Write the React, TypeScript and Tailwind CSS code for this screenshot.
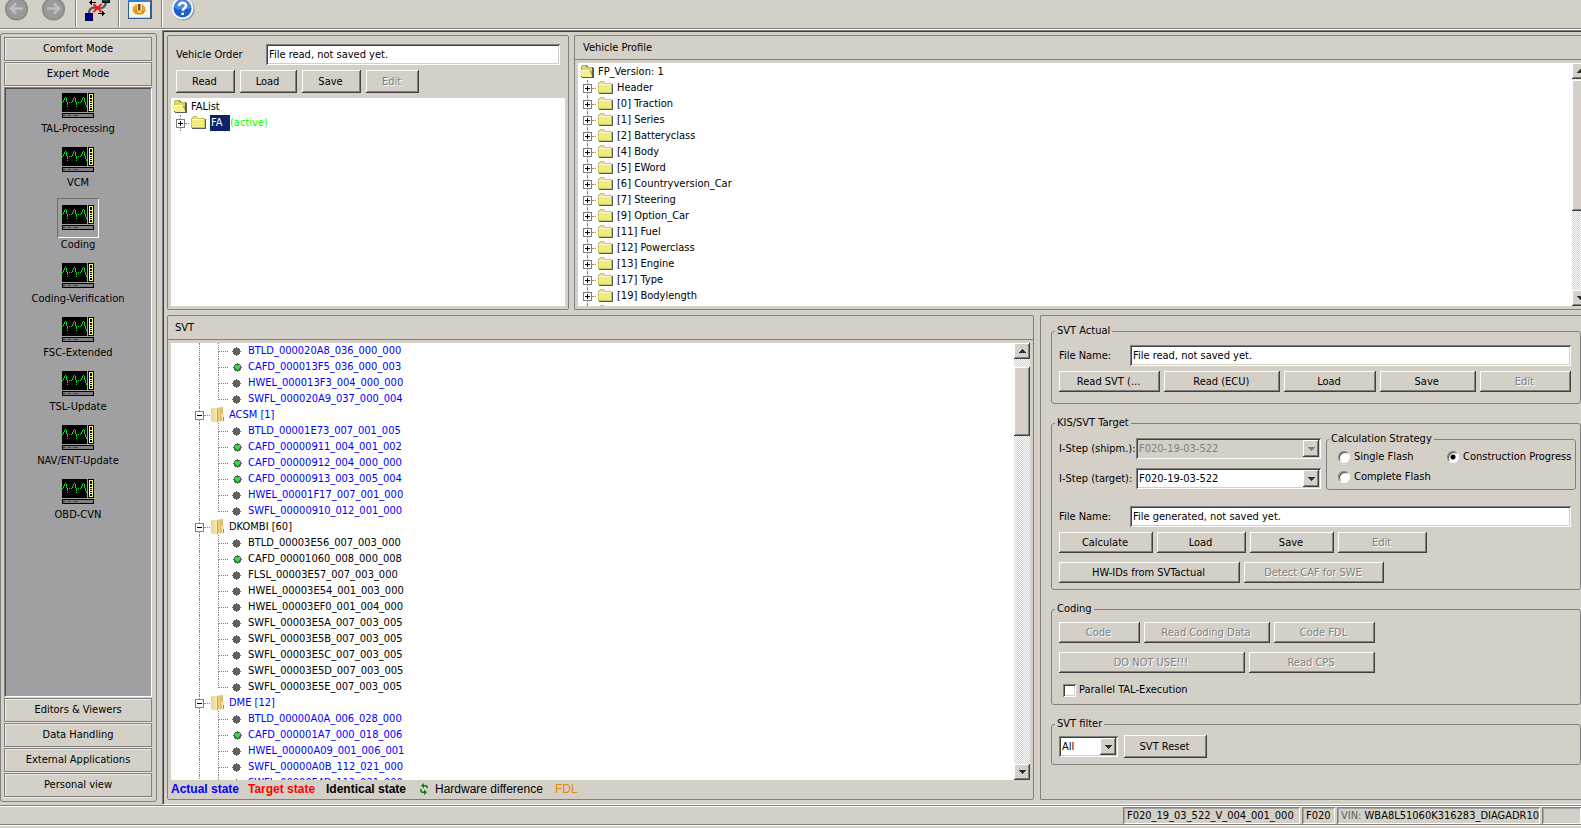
import type { ReactNode } from "react";

const RAISED =
  "bg-[#d4d0c8] shadow-[inset_-1px_-1px_#404040,inset_1px_1px_#ffffff,inset_-2px_-2px_#808080]";
const SUNKEN =
  "shadow-[inset_1px_1px_#808080,inset_-1px_-1px_#ffffff,inset_2px_2px_#404040,inset_-2px_-2px_#d4d0c8]";

/* ---------- controls ---------- */

function Btn({ children, className = "h-[21px]", disabled = false }: { children: ReactNode; className?: string; disabled?: boolean }) {
  return (
    <button
      type="button"
      disabled={disabled}
      className={`${RAISED} truncate pr-[9px] pl-[7px] text-center ${disabled ? "text-[#808080] [text-shadow:1px_1px_#ffffff]" : ""} ${className}`}
    >
      {children}
    </button>
  );
}

function TextField({ id, value }: { id: string; value: string }) {
  return (
    <input
      id={id}
      type="text"
      defaultValue={value}
      className={`${SUNKEN} h-[21px] min-w-0 flex-1 bg-white px-[3px] outline-none`}
    />
  );
}

function Dropdown({ id, value, className, disabled = false, label }: { id: string; value: string; className: string; disabled?: boolean; label?: string }) {
  return (
    <div className={`relative h-[21px] ${className}`}>
      <select
        id={id}
        disabled={disabled}
        aria-label={label}
        className={`${SUNKEN} h-full w-full appearance-none px-[3px] opacity-100 outline-none ${disabled ? "bg-[#d4d0c8] text-[#808080]" : "bg-white"}`}
      >
        <option>{value}</option>
      </select>
      <span className={`${RAISED} pointer-events-none absolute top-[2px] right-[2px] bottom-[2px] flex w-4 items-center justify-center`}>
        <Arrow down color={disabled ? "#808080" : "#303030"} />
      </span>
    </div>
  );
}

function Arrow({ down = false, color = "#303030" }: { down?: boolean; color?: string }) {
  return (
    <svg width="7" height="4" viewBox="0 0 7 4" fill={color} shapeRendering="crispEdges" aria-hidden="true">
      <path d={down ? "M0 0h7v1h-1v1h-1v1h-1v1h-1v-1h-1v-1h-1v-1h-1z" : "M3 0h1v1h1v1h1v1h1v1h-7v-1h1v-1h1v-1h1z"} />
    </svg>
  );
}

function ScrollBar({ className, gap, thumb }: { className: string; gap: string; thumb: string }) {
  return (
    <div className={`flex shrink-0 flex-col overflow-hidden bg-[repeating-conic-gradient(#ffffff_0_25%,#d4d0c8_0_50%)] bg-[length:2px_2px] ${className}`}>
      <button type="button" aria-label="Scroll up" className={`${RAISED} flex h-4 w-4 shrink-0 items-center justify-center`}>
        <Arrow />
      </button>
      <div className={`${RAISED} w-4 ${gap} ${thumb}`} />
      <button type="button" aria-label="Scroll down" className={`${RAISED} mt-auto flex h-4 w-4 shrink-0 items-center justify-center`}>
        <Arrow down />
      </button>
    </div>
  );
}

function Group({ title, legend = "-ml-1", className = "", children }: { title: string; legend?: string; className?: string; children: ReactNode }) {
  return (
    <fieldset className={`min-w-0 rounded-[3px] border border-[#808080] ${className}`}>
      <legend className={`px-[2px] leading-4 ${legend}`}>{title}</legend>
      {children}
    </fieldset>
  );
}

/* ---------- icons ---------- */

function FolderClosed() {
  return (
    <svg width="15" height="13" viewBox="0 0 15 13" shapeRendering="crispEdges" className="-mt-[2px] shrink-0" aria-hidden="true">
      <path d="M1 1h1v-1h4v1h1v1h7v1h1v10h-14v-1h-1v-10h1z" fill="#5c5c50" />
      <path d="M1 1h1v-1h4v1h1v1h7v10h-14v-10h1z" fill="#c6c25c" />
      <path d="M2 1h4v1h1v1h-5z" fill="#e6e27a" />
      <path d="M1 3h12v8h-12z" fill="#f2ee84" />
      <path d="M1 3h12v1h-12z" fill="#fdfdea" />
      <path d="M3 5h1v1h-1zM7 6h1v1h-1zM11 5h1v1h-1zM5 8h1v1h-1zM9 9h1v1h-1zM2 9h1v1h-1zM11 8h1v1h-1z" fill="#e0d75c" />
    </svg>
  );
}

function FolderOpen() {
  return (
    <svg width="15" height="13" viewBox="0 0 15 13" shapeRendering="crispEdges" className="-mt-[2px] shrink-0" aria-hidden="true">
      <path d="M3 1h1v-1h4v1h1v1h5v1h1v10h-12v-1h-1v-4h-1v-3h1v-3h1z" fill="#5c5c50" />
      <path d="M2 1h1v-1h4v1h1v1h5v10h-10v-1h-1z" fill="#b5b04c" />
      <path d="M3 1h4v1h1v1h5v3h-10z" fill="#dcd76c" />
      <path d="M0 5h10v1h1v2h1v2h1v2h-10v-1h-1v-2h-1v-2h-1z" fill="#f4f090" />
      <path d="M0 5h10v1h-9z" fill="#fffff0" />
    </svg>
  );
}

function FolderEcu() {
  return (
    <svg width="14" height="16" viewBox="0 0 14 16" className="shrink-0" aria-hidden="true">
      <defs>
        <linearGradient id="ecuLeft" x1="0" x2="1">
          <stop offset="0" stopColor="#ecd586" />
          <stop offset="1" stopColor="#f8e9b4" />
        </linearGradient>
        <linearGradient id="ecuRight" x1="0" x2="1">
          <stop offset="0" stopColor="#f3dd92" />
          <stop offset="1" stopColor="#dcb75a" />
        </linearGradient>
      </defs>
      <path d="M4 1l8-1v14l-7 1z" fill="url(#ecuRight)" />
      <path d="M0 1h4l2 1v14l-6-2z" fill="url(#ecuLeft)" />
      <path d="M6 2l1-1v14l-1 1z" fill="#cfa848" />
      <path d="M10 7h3v7h-2z" fill="#f5e6b4" />
      <path d="M12 10h1v4h-1z" fill="#4aa0e0" />
    </svg>
  );
}

function Bullet({ green }: { green: boolean }) {
  return (
    <svg width="9" height="9" viewBox="0 0 9 9" shapeRendering="crispEdges" className={green ? "ml-[5px] shrink-0" : "ml-1 shrink-0"} aria-hidden="true">
      <path d="M4 0h1v1h2v1h1v2h1v1h-1v2h-1v1h-2v1h-1v-1h-2v-1h-1v-2h-1v-1h1v-2h1v-1h2z" fill="#606060" />
      {green && <path d="M2 2h2v1h1v-1h2v3h-1v1h-1v1h-1v-1h-1v-1h-1z" fill="#1fee1f" />}
    </svg>
  );
}

function EcuIcon() {
  return (
    <svg width="32" height="25" viewBox="0 0 32 25" shapeRendering="crispEdges" aria-hidden="true">
      <path d="M0 0h25v19h-25zM26 0h6v19h-6zM0 20h32v5h-32z" fill="#000000" />
      <path d="M27 1h4v17h-4z" fill="#ffff66" />
      <path d="M28 2h2v3h-2zM28 6h2v2h-2zM28 9h2v1h-2zM28 11h2v1h-2zM28 13h2v1h-2zM28 15h2v2h-2z" fill="#000000" />
      <path d="M1 21h30v3h-30z" fill="#808080" />
      <path d="M1 22h3v1h-3zM6 22h3v1h-3zM11 22h5v1h-5z" fill="#e00000" />
      <g fill="#00e020">
        <path d="M0 9h1v1h-1zM1 7h1v2h-1zM2 5h1v2h-1zM3 4h1v1h-1zM4 5h1v4h-1zM5 9h1v3h-1zM5 13h1v1h-1zM7 9h1v1h-1zM9 9h1v1h-1z" />
        <path d="M10 7h1v2h-1zM11 5h1v2h-1zM12 4h1v1h-1zM13 5h1v4h-1zM14 9h1v3h-1zM14 13h1v1h-1zM16 9h1v1h-1zM18 9h1v1h-1z" />
        <path d="M19 7h1v2h-1zM20 5h1v2h-1zM21 4h1v1h-1zM22 5h1v4h-1zM23 9h1v3h-1zM24 12h1v2h-1z" />
      </g>
    </svg>
  );
}

function NavArrow({ back }: { back: boolean }) {
  return (
    <svg width="25" height="22" viewBox="0 0 25 22" aria-hidden="true">
      <circle cx="12.5" cy="9" r="11.6" fill="#8c8c8c" />
      <circle cx="12.5" cy="9" r="9.8" fill="#9a9a9a" />
      <path
        d={back ? "M19 8.500H7M12 3.500L7 8.500l5 5" : "M6 8.500h12M13 3.500L18 8.500l-5 5"}
        fill="none"
        stroke="#c2bfb9"
        strokeWidth="2.600"
      />
    </svg>
  );
}

function ConnectionIcon() {
  return (
    <svg width="25" height="22" viewBox="0 0 25 22" aria-hidden="true">
      <path d="M4 14c0-7 5-7 9-6s8-1 8-7" fill="none" stroke="#5a5a5a" strokeWidth="2.400" />
      <g shapeRendering="crispEdges">
        <path d="M17 0h8v3h-8z" fill="#000000" />
        <path d="M18 0h6v2h-6z" fill="#00504c" />
        <path d="M0 13h8v8h-8z" fill="#000030" />
        <path d="M1 14h6v6h-6z" fill="#00008c" />
        <path d="M4 2h1v-1h1v-1h1v2h4v1h-4v2h-1v-1h-1v-1h-1z" fill="#000000" />
        <path d="M13 13h4v-2h1v1h1v1h1v1h-1v1h-1v1h-1v-2h-4z" fill="#000000" />
      </g>
      <path d="M8.500 4l8 8M16.500 4l-8 8" stroke="#f01414" strokeWidth="1.800" />
    </svg>
  );
}

function WindowIcon() {
  return (
    <svg width="24" height="19" viewBox="0 0 24 19" aria-hidden="true">
      <path d="M0 0h24v19h-24z" fill="#2c5f94" />
      <path d="M0 0h23v2h-23z" fill="#2f7fd0" />
      <path d="M19 0h3v1h-3z" fill="#e0522c" />
      <path d="M1 2h21v15h-21z" fill="#f6f5ea" />
      <path d="M1 17h21v1h-21z" fill="#bcd2e6" />
      <path d="M8 4l1.500 1-.5 5h5l-.5-5 1.500-1 .5 2 2 1.500-.5 1.500 1 2-2 1-.5 2h-2l-1 1-1.500-.5-1.500.5-1-1h-2l-.5-2-2-1 1-2-.5-1.500 2-1.500z" fill="#eda022" />
      <path d="M6 11h11l-2 3h-7z" fill="#d98a1a" />
      <path d="M10 4h2.500v6.500h-2.500z" fill="#6a5424" />
      <path d="M9.500 10.500h4v2.500h-4z" fill="#f8dc8c" />
    </svg>
  );
}

function HelpIcon() {
  return (
    <svg width="24" height="22" viewBox="0 0 24 22" aria-hidden="true">
      <circle cx="12.500" cy="9.500" r="11" fill="#8a98ac" />
      <circle cx="11.500" cy="8.500" r="10.800" fill="#f4f8ff" />
      <circle cx="11.500" cy="8.500" r="9" fill="#1f5fc8" />
      <path d="M3.500 8a8 8 0 0 1 16 0c-4 2-12 2-16 0z" fill="#4d8ae4" />
      <path d="M8.200 6c0-4.200 6.800-4.200 6.800-.4 0 2.600-3.300 2.600-3.300 5.200" fill="none" stroke="#ffffff" strokeWidth="2.400" />
      <path d="M10.400 12.600h2.600v2.400h-2.600z" fill="#ffffff" />
    </svg>
  );
}

function HardwareIcon() {
  return (
    <svg width="10" height="12" viewBox="0 0 10 12" fill="#108018" aria-hidden="true">
      <path d="M5 0v2h2q2 0 2 3h-1.500q0-1.500-1-1.500h-1.500v2l-3-2.700z" />
      <path d="M5 12v-2h-2q-2 0-2-4h1.500q0 2.500 1 2.500h1.500v-2l3 2.700z" />
    </svg>
  );
}

/* ---------- tree parts ---------- */

function Expander({ open = false }: { open?: boolean }) {
  return (
    <span className="flex h-4 shrink-0 flex-col items-center">
      <span className="h-1 w-px border-l border-dotted border-[#808080]" />
      <button
        type="button"
        aria-label={open ? "Collapse" : "Expand"}
        className="flex h-[9px] w-[9px] shrink-0 items-center justify-center border border-[#808080] bg-white"
      >
        <svg width="5" height="5" viewBox="0 0 5 5" shapeRendering="crispEdges" aria-hidden="true">
          <path d={open ? "M0 2h5v1h-5z" : "M0 2h2v-2h1v2h2v1h-2v2h-1v-2h-2z"} fill="#000000" />
        </svg>
      </button>
      <span className="h-[3px] w-px border-l border-dotted border-[#808080]" />
    </span>
  );
}

function FolderRow({ children }: { children: ReactNode }) {
  return (
    <li className="flex h-4 items-center pl-[5px] leading-4 whitespace-pre">
      <Expander />
      <span className="mr-[2px] mt-px w-1 border-t border-dotted border-[#808080]" />
      <FolderClosed />
      <span className="ml-1 flex">{children}</span>
    </li>
  );
}

function RootRow({ children }: { children: ReactNode }) {
  return (
    <li className="flex h-4 items-center gap-1 pl-px leading-4">
      <FolderOpen />
      {children}
    </li>
  );
}

type Ecu = { name?: string; blue: boolean; items: string[] };

const ECUS: Ecu[] = [
  {
    blue: true,
    items: ["BTLD_000020A8_036_000_000", "CAFD_000013F5_036_000_003", "HWEL_000013F3_004_000_000", "SWFL_000020A9_037_000_004"],
  },
  {
    name: "ACSM [1]",
    blue: true,
    items: [
      "BTLD_00001E73_007_001_005",
      "CAFD_00000911_004_001_002",
      "CAFD_00000912_004_000_000",
      "CAFD_00000913_003_005_004",
      "HWEL_00001F17_007_001_000",
      "SWFL_00000910_012_001_000",
    ],
  },
  {
    name: "DKOMBI [60]",
    blue: false,
    items: [
      "BTLD_00003E56_007_003_000",
      "CAFD_00001060_008_000_008",
      "FLSL_00003E57_007_003_000",
      "HWEL_00003E54_001_003_000",
      "HWEL_00003EF0_001_004_000",
      "SWFL_00003E5A_007_003_005",
      "SWFL_00003E5B_007_003_005",
      "SWFL_00003E5C_007_003_005",
      "SWFL_00003E5D_007_003_005",
      "SWFL_00003E5E_007_003_005",
    ],
  },
  {
    name: "DME [12]",
    blue: true,
    items: [
      "BTLD_00000A0A_006_028_000",
      "CAFD_000001A7_000_018_006",
      "HWEL_00000A09_001_006_001",
      "SWFL_00000A0B_112_021_000",
      "SWFL_00000F4D_112_021_000",
    ],
  },
];

const PROFILE = [
  "Header",
  "[0] Traction",
  "[1] Series",
  "[2] Batteryclass",
  "[4] Body",
  "[5] EWord",
  "[6] Countryversion_Car",
  "[7] Steering",
  "[9] Option_Car",
  "[11] Fuel",
  "[12] Powerclass",
  "[13] Engine",
  "[17] Type",
  "[19] Bodylength",
];

function EcuTree() {
  return (
    <ul className="min-h-0 flex-1 overflow-hidden bg-white">
      {ECUS.map((ecu, i) => (
        <li key={i} className={ecu.blue ? "text-[#0000ff]" : ""}>
          {ecu.name && (
            <div className="flex h-4 items-center pl-6 leading-4">
              <Expander open />
              <span className="mt-px mr-px w-[6px] border-t border-dotted border-[#808080]" />
              <FolderEcu />
              <span className="ml-1">{ecu.name}</span>
            </div>
          )}
          <ul>
            {ecu.items.map((item, j) => (
              <li key={item} className="flex h-4 items-center pl-7 leading-4">
                <span className="h-4 w-[19px] shrink-0 border-l border-dotted border-[#808080]" />
                <span className="flex w-[10px] shrink-0 flex-col">
                  <span className="h-[9px] border-b border-l border-dotted border-[#808080]" />
                  <span className={j === ecu.items.length - 1 ? "h-[7px]" : "h-[7px] border-l border-dotted border-[#808080]"} />
                </span>
                <span className="flex w-5 items-center">
                  <Bullet green={item.startsWith("CAFD")} />
                </span>
                <span>{item}</span>
              </li>
            ))}
          </ul>
        </li>
      ))}
    </ul>
  );
}

/* ---------- regions ---------- */

function ToolBar() {
  return (
    <header className="flex h-[29px] shrink-0 items-start border-b border-[#808080]">
      <div className="flex h-[27px] w-[76px] items-start gap-3 border-r border-[#808080] pl-1">
        <button type="button" aria-label="Back" disabled><NavArrow back /></button>
        <button type="button" aria-label="Forward" disabled><NavArrow back={false} /></button>
      </div>
      <div className="flex h-[27px] w-[43px] items-start border-r border-l border-r-[#808080] border-l-white pl-2">
        <button type="button" aria-label="Connection"><ConnectionIcon /></button>
      </div>
      <div className="flex h-[27px] w-[43px] items-start border-r border-l border-r-[#808080] border-l-white pl-2">
        <button type="button" aria-label="Settings"><WindowIcon /></button>
      </div>
      <div className="flex h-[27px] items-start border-l border-white pl-2">
        <button type="button" aria-label="Help"><HelpIcon /></button>
      </div>
    </header>
  );
}

function ModeButton({ children }: { children: ReactNode }) {
  return (
    <button
      type="button"
      className="h-6 shrink-0 border border-[#808080] shadow-[inset_1px_1px_#ece9e4,0_1px_#ece9e4]"
    >
      {children}
    </button>
  );
}

const TOOLS = ["TAL-Processing", "VCM", "Coding", "Coding-Verification", "FSC-Extended", "TSL-Update", "NAV/ENT-Update", "OBD-CVN"];

function SideBar() {
  return (
    <aside className="flex w-[162px] shrink-0 flex-col pt-[3px] pr-[5px] pb-[3px]">
      <nav className="flex min-h-0 flex-1 flex-col gap-px rounded-[3px] border border-[#808080] pt-[3px] pr-1 pb-1 pl-[3px]">
        <ModeButton>Comfort Mode</ModeButton>
        <ModeButton>Expert Mode</ModeButton>
        <div className="flex min-h-0 flex-1 flex-col items-center gap-2 bg-[#a0a0a2] pt-[3px] shadow-[inset_1px_1px_#808080,inset_-1px_-1px_#ffffff,inset_2px_2px_#505050]">
          {TOOLS.map((tool) => (
            <button key={tool} type="button" className="flex flex-col items-center">
              <span
                className={
                  tool === "Coding"
                    ? "flex h-10 w-[42px] justify-center pt-[7px] shadow-[inset_1px_1px_#707068,inset_-1px_-1px_#ffffff]"
                    : "flex h-8 justify-center pt-[3px]"
                }
              >
                <EcuIcon />
              </span>
              <span className="leading-[14px]">{tool}</span>
            </button>
          ))}
        </div>
        <ModeButton>Editors &amp; Viewers</ModeButton>
        <ModeButton>Data Handling</ModeButton>
        <ModeButton>External Applications</ModeButton>
        <ModeButton>Personal view</ModeButton>
      </nav>
    </aside>
  );
}

function VehicleOrder() {
  return (
    <section className="flex w-[402px] shrink-0 flex-col rounded-[2px] border border-[#808080] px-[3px] pt-2 pb-[3px]">
      <div className="flex items-center px-[5px]">
        <label htmlFor="vehicle-order" className="w-[90px]">Vehicle Order</label>
        <TextField id="vehicle-order" value="File read, not saved yet." />
      </div>
      <div className="mt-[5px] flex gap-[5px] px-[5px]">
        <Btn className="h-[23px] w-[59px]">Read</Btn>
        <Btn className="h-[23px] w-[57px]">Load</Btn>
        <Btn className="h-[23px] w-[59px]">Save</Btn>
        <Btn className="h-[23px] w-[53px]" disabled>Edit</Btn>
      </div>
      <ul className="mt-[5px] flex-1 bg-white pt-px">
        <RootRow>FAList</RootRow>
        <FolderRow>
          <span className="w-5 bg-[#0a246a] pl-px text-white">FA</span>
          <span className="text-[#00ff00]">(active)</span>
        </FolderRow>
      </ul>
    </section>
  );
}

function VehicleProfile() {
  return (
    <section className="flex min-w-0 flex-1 flex-col rounded-l-[2px] border-y border-l border-[#808080] pb-[3px]">
      <h2 className="flex h-6 shrink-0 items-center border-b border-[#808080] pl-2">Vehicle Profile</h2>
      <div className="mt-[3px] flex min-h-0 flex-1 pl-[3px]">
        <ul className="min-w-0 flex-1 overflow-hidden bg-white pt-px">
          <RootRow>FP_Version: 1</RootRow>
          {PROFILE.map((p) => (
            <FolderRow key={p}>{p}</FolderRow>
          ))}
          <FolderRow> </FolderRow>
        </ul>
        <ScrollBar className="w-[9px]" gap="mt-px" thumb="h-[131px]" />
      </div>
    </section>
  );
}

function SvtPanel() {
  return (
    <section className="flex min-w-0 flex-1 flex-col rounded-[2px] border border-[#808080]">
      <h2 className="flex h-6 shrink-0 items-center border-b border-[#808080] pl-[7px]">SVT</h2>
      <div className="mt-[3px] flex min-h-0 flex-1 px-[3px]">
        <EcuTree />
        <ScrollBar className="w-4" gap="mt-2" thumb="h-[69px]" />
      </div>
      <div className='flex h-[19px] shrink-0 items-center pb-[2px] pl-[3px] font-["Liberation_Sans",sans-serif] text-xs whitespace-nowrap'>
        <b className="w-[77px] text-[#0000ff]">Actual state</b>
        <b className="w-[78px] text-[#ff0000]">Target state</b>
        <b className="w-[93px]">Identical state</b>
        <HardwareIcon />
        <span className="ml-[6px] w-[120px]">Hardware difference</span>
        <span className="text-[#e08c10]">FDL</span>
      </div>
    </section>
  );
}

function Radio({ label, checked = false }: { label: string; checked?: boolean }) {
  return (
    <label className="flex h-4 items-center gap-1 whitespace-nowrap">
      <input
        type="radio"
        name="strategy"
        defaultChecked={checked}
        className="h-3 w-3 shrink-0 appearance-none rounded-full border border-t-[#808080] border-r-white border-b-white border-l-[#808080] bg-white shadow-[inset_1px_1px_#505050] checked:bg-[radial-gradient(circle,#000000_2px,#ffffff_3px)]"
      />
      {label}
    </label>
  );
}

function ControlPanel() {
  return (
    <section className="flex w-[541px] shrink-0 flex-col gap-[11px] rounded-l-[2px] border-y border-l border-[#808080] pt-[7px] pl-[10px]">
      <Group title="SVT Actual" className="pt-[6px] pr-[9px] pb-[11px] pl-[7px]">
        <div className="flex items-center">
          <label htmlFor="actual-file" className="w-[71px]">File Name:</label>
          <TextField id="actual-file" value="File read, not saved yet." />
        </div>
        <div className="mt-[5px] flex gap-1">
          <Btn className="h-[21px] grow basis-[101px]">Read SVT (...</Btn>
          <Btn className="h-[21px] grow basis-[116px]">Read (ECU)</Btn>
          <Btn className="h-[21px] grow basis-[91px]">Load</Btn>
          <Btn className="h-[21px] grow basis-[96px]">Save</Btn>
          <Btn className="h-[21px] grow basis-[91px]" disabled>Edit</Btn>
        </div>
      </Group>

      <Group title="KIS/SVT Target" className="pr-1 pb-[6px] pl-[7px]">
        <div className="flex gap-[5px]">
          <div className="flex flex-col gap-[9px] pt-[7px]">
            <div className="flex items-center">
              <label htmlFor="istep-ship" className="w-[77px] whitespace-nowrap">I-Step (shipm.):</label>
              <Dropdown id="istep-ship" value="F020-19-03-522" className="w-[185px]" disabled />
            </div>
            <div className="flex items-center">
              <label htmlFor="istep-target" className="w-[77px] whitespace-nowrap">I-Step (target):</label>
              <Dropdown id="istep-target" value="F020-19-03-522" className="w-[185px]" />
            </div>
          </div>
          <Group title="Calculation Strategy" legend="-ml-[9px]" className="grow pt-[2px] pb-1 pl-[11px]">
            <div className="grid grid-cols-[109px_1fr] gap-y-1">
              <Radio label="Single Flash" />
              <Radio label="Construction Progress" checked />
              <Radio label="Complete Flash" />
            </div>
          </Group>
        </div>
        <div className="mt-4 flex items-center pr-[5px]">
          <label htmlFor="target-file" className="w-[71px]">File Name:</label>
          <TextField id="target-file" value="File generated, not saved yet." />
        </div>
        <div className="mt-[5px] flex gap-1">
          <Btn className="h-[21px] w-[94px]">Calculate</Btn>
          <Btn className="h-[21px] w-[89px]">Load</Btn>
          <Btn className="h-[21px] w-[84px]">Save</Btn>
          <Btn className="h-[21px] w-[89px]" disabled>Edit</Btn>
        </div>
        <div className="mt-[9px] flex gap-1">
          <Btn className="h-[21px] w-[181px]">HW-IDs from SVTactual</Btn>
          <Btn className="h-[21px] w-[140px]" disabled>Detect CAF for SWE</Btn>
        </div>
      </Group>

      <Group title="Coding" className="pt-[5px] pb-[6px] pl-[7px]">
        <div className="flex gap-1">
          <Btn className="h-[21px] w-[81px]" disabled>Code</Btn>
          <Btn className="h-[21px] w-[126px]" disabled>Read Coding Data</Btn>
          <Btn className="h-[21px] w-[101px]" disabled>Code FDL</Btn>
        </div>
        <div className="mt-[9px] flex gap-1">
          <Btn className="h-[21px] w-[186px]" disabled>DO NOT USE!!!</Btn>
          <Btn className="h-[21px] w-[126px]" disabled>Read CPS</Btn>
        </div>
        <label className="mt-[9px] flex h-4 items-center gap-[3px] pl-1">
          <input type="checkbox" className={`${SUNKEN} h-[13px] w-[13px] appearance-none bg-white`} />
          Parallel TAL-Execution
        </label>
      </Group>

      <Group title="SVT filter" className="pt-[3px] pb-[6px] pl-[7px]">
        <div className="flex items-center gap-[6px]">
          <Dropdown id="svt-filter" value="All" className="w-[59px]" label="SVT filter" />
          <Btn className="h-[23px] w-[83px]">SVT Reset</Btn>
        </div>
      </Group>
    </section>
  );
}

function StatusBar() {
  const cell = "flex h-[17px] items-center whitespace-pre px-1 shadow-[inset_1px_1px_#808080,inset_-1px_-1px_#ffffff,inset_2px_2px_#a8a49c]";
  return (
    <footer className="shrink-0 border-t border-[#808080]">
      <div className="flex justify-end gap-[2px] border-t border-b border-t-white border-b-[#808080]">
        <span className={`${cell} w-[177px]`}>F020_19_03_522_V_004_001_000</span>
        <span className={`${cell} w-[33px]`}>F020</span>
        <span className={`${cell} w-[203px]`}>
          <span className="text-[#606060]">VIN: </span>WBA8L51060K316283_DIAGADR10
        </span>
        <span className={`${cell} w-[39px]`} />
      </div>
      <div className="h-[3px] border-t border-white" />
    </footer>
  );
}

export default function App() {
  return (
    <div className='flex h-screen flex-col overflow-hidden bg-[#d4d0c8] font-["DejaVu_Sans_Condensed","Liberation_Sans",sans-serif] text-[11px] leading-4 text-black'>
      <ToolBar />
      <div className="flex min-h-0 flex-1 border-t border-white">
        <SideBar />
        <main className="min-w-0 flex-1 border-t border-b border-l border-t-[#808080] border-b-white border-l-[#808080]">
          <div className="flex h-full flex-col gap-[5px] border-t border-l border-[#404040] pt-[3px] pb-1 pl-[3px]">
            <div className="flex h-[275px] shrink-0 gap-[5px]">
              <VehicleOrder />
              <VehicleProfile />
            </div>
            <div className="flex min-h-0 flex-1 gap-[6px]">
              <SvtPanel />
              <ControlPanel />
            </div>
          </div>
        </main>
      </div>
      <StatusBar />
    </div>
  );
}
